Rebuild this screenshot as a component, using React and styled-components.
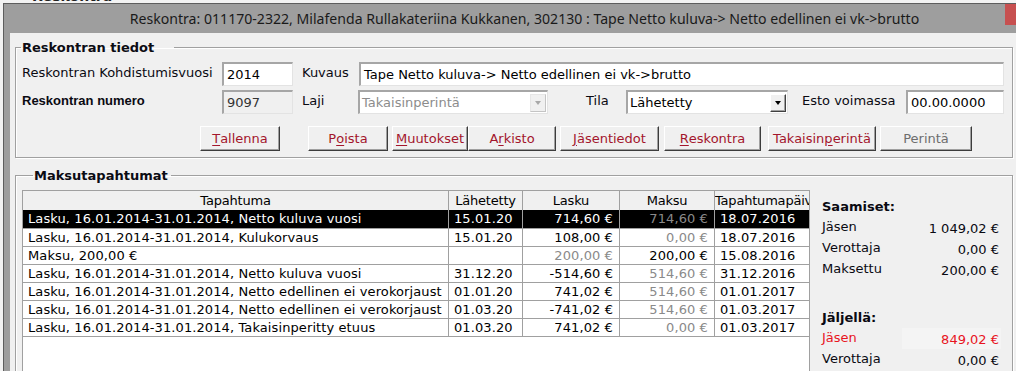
import React from 'react';
import styled, { createGlobalStyle } from 'styled-components';

const GlobalStyle = createGlobalStyle`
  html, body {
    margin: 0;
    padding: 0;
    background: #f3f3f3;
    overflow: hidden;
  }
  body {
    font-family: "DejaVu Sans", Verdana, sans-serif;
    font-size: 13px;
    color: #000;
  }
`;

const Screen = styled.div`
  width: 1016px;
  height: 371px;
  overflow: hidden;
  background: #f3f3f3;
`;

const Backdrop = styled.div`
  height: 3px;
  overflow: hidden;
  padding-left: 32px;
  font: bold 14px "DejaVu Sans", sans-serif;
  line-height: 14px;
  color: #222;

  span {
    display: block;
    margin-top: -11px;
  }
`;

const Window = styled.div`
  margin-left: 3px;
  width: 1042px;
  height: 368px;
  box-sizing: border-box;
  border-top: 1px solid #5e5e5e;
  border-left: 1px solid #5e5e5e;
  background: #9e9e9e;
  padding-left: 6px;
  display: flex;
  flex-direction: column;
`;

const TitleBar = styled.div`
  height: 29px;
  margin-left: -6px;
  display: grid;
  grid-template-columns: 1fr auto 1fr;
  font-family: "Noto Sans", "Open Sans", sans-serif;
  font-size: 14.1px;
  color: #1a1a1a;
`;

const TitleText = styled.div`
  grid-column: 2;
  align-self: center;
  white-space: nowrap;
  padding-bottom: 1px;
`;

const CloseButton = styled.div`
  grid-column: 3;
  justify-self: end;
  width: 40px;
  height: 21px;
  background: #c75050;
`;

const Client = styled.div`
  flex: 1;
  background: #f0f0f0;
  padding: 0 0 0 5px;
  overflow: hidden;
`;

const Group = styled.fieldset`
  margin: ${p => p.$mt}px 0 0 0;
  width: 998px;
  height: ${p => p.$h}px;
  box-sizing: border-box;
  padding: ${p => p.$pt}px 0 0 6px;
  border: 1px solid #a0a0a0;
  box-shadow: inset 1px 1px 0 #fff, 1px 1px 0 #fff;
  min-width: 0;
`;

const Legend = styled.legend`
  font-weight: bold;
  font-size: 13px;
  line-height: 15px;
  color: #0c0c14;
  padding: 0 ${p => p.$pr}px 0 1px;
  margin-left: ${p => p.$ml}px;
`;

const FormRow = styled.div`
  display: flex;
  align-items: center;
  height: 24px;
  margin-top: ${p => p.$mt || 0}px;
`;

const Label = styled.div`
  width: ${p => p.$w}px;
  flex-shrink: 0;
  box-sizing: border-box;
  padding-left: ${p => p.$pl || 0}px;
  padding-bottom: 3px;
  font-family: ${p => (p.$bold ? '"Liberation Sans", Arial, sans-serif' : 'inherit')};
  font-weight: ${p => (p.$bold ? 'bold' : 'normal')};
  white-space: nowrap;
  color: #0a0a12;
`;

const TextBox = styled.div`
  width: ${p => p.$w}px;
  flex-shrink: 0;
  height: 24px;
  box-sizing: border-box;
  border-style: solid;
  border-width: 2px 1px 1px 2px;
  border-color: #a6a6a6 #e3e3e3 #e3e3e3 #a6a6a6;
  background: ${p => (p.$disabled ? '#f0f0f0' : '#fff')};
  color: ${p => (p.$disabled ? '#333' : '#000')};
  padding: 0 3px;
  line-height: 21px;
  white-space: nowrap;
  overflow: hidden;
`;

const Combo = styled.div`
  width: ${p => p.$w}px;
  flex-shrink: 0;
  height: 24px;
  box-sizing: border-box;
  border-style: solid;
  border-width: 2px 1px 1px 2px;
  border-color: #a6a6a6 #e3e3e3 #e3e3e3 #a6a6a6;
  background: #fff;
  display: flex;
  align-items: center;
  color: ${p => (p.$disabled ? '#8c8c8c' : '#000')};
`;

const ComboText = styled.div`
  flex: 1;
  padding-left: 2px;
  line-height: 20px;
  white-space: nowrap;
  overflow: hidden;
`;

const ComboButton = styled.div`
  width: 16px;
  height: 18px;
  margin-right: 1px;
  box-sizing: border-box;
  background: #f0f0f0;
  border: 1px solid;
  border-color: ${p => (p.$disabled ? '#e6e6e6 #c4c4c4 #c4c4c4 #e6e6e6' : '#fff #404040 #404040 #fff')};
  box-shadow: ${p => (p.$disabled ? 'none' : 'inset -1px -1px 0 #a0a0a0')};
  display: flex;
  align-items: center;
  justify-content: center;

  &::after {
    content: '';
    border-left: 3.5px solid transparent;
    border-right: 3.5px solid transparent;
    border-top: 4px solid ${p => (p.$disabled ? '#a8a8a8' : '#000')};
    margin-top: 1px;
  }
`;

const ButtonRow = styled.div`
  display: flex;
  margin-top: 12px;
`;

const Button = styled.div`
  width: ${p => p.$w}px;
  flex-shrink: 0;
  height: 25px;
  margin-left: ${p => p.$ml}px;
  box-sizing: border-box;
  background: #f0f0f0;
  border: 1px solid;
  border-color: #fff #3c3c3c #3c3c3c #fff;
  box-shadow: inset -1px -1px 0 #a0a0a0;
  display: flex;
  align-items: center;
  justify-content: center;
  color: ${p => (p.$disabled ? '#6d6d6d' : '#a3162c')};
  white-space: nowrap;
  padding-bottom: 1px;

  u {
    text-underline-offset: 2px;
  }
`;

const Split = styled.div`
  display: flex;
`;

const TableBox = styled.div`
  width: 788px;
  flex-shrink: 0;
  height: 200px;
  box-sizing: border-box;
  border: 1px solid #a0a0a0;
  background: #fff;
  overflow: hidden;
`;

const Row = styled.div`
  display: grid;
  grid-template-columns: 426px 74px 97px 95px 94px;
  height: ${p => p.$h}px;
  box-sizing: border-box;
  border-bottom: ${p => (p.$head ? 'none' : '1px solid #a0a0a0')};
  background: ${p => (p.$head ? '#f0f0f0' : p.$selected ? '#000' : '#fff')};
  color: ${p => (p.$selected ? '#fff' : '#000')};
  letter-spacing: ${p => (p.$head ? '-0.2px' : '0.1px')};
`;

const Cell = styled.div`
  box-sizing: border-box;
  border-right: 1px solid #a0a0a0;
  padding: ${p => (p.$head ? '0' : p.$right ? '0 6px 0 0' : '0 0 0 5px')};
  text-align: ${p => (p.$head ? 'center' : p.$right ? 'right' : 'left')};
  line-height: ${p => p.$lh}px;
  white-space: nowrap;
  overflow: hidden;
  color: ${p => (p.$dim ? '#8a8a8a' : 'inherit')};

  &:last-child {
    border-right: none;
  }
`;

const Summary = styled.div`
  width: 201px;
  flex-shrink: 0;
  box-sizing: border-box;
  padding: 7px 12px 0 12px;
  line-height: 20px;
  color: #0a0a12;
`;

const SummaryTitle = styled.div`
  font-weight: bold;
  margin-top: ${p => p.$mt || 0}px;
`;

const SummaryLine = styled.div`
  display: flex;
  justify-content: space-between;
  color: ${p => (p.$alert ? '#e8141e' : 'inherit')};
`;

const SummaryValue = styled.span`
  padding: 3px 2px 0 2px;
  margin-right: -2px;
  line-height: 18px;
  background: ${p => (p.$alert ? '#f4f4f4' : 'transparent')};
  width: ${p => (p.$alert ? '95px' : 'auto')};
  text-align: right;
`;

const buttons = [
  { pre: '', key: 'T', post: 'allenna', ml: 178, w: 80 },
  { pre: 'P', key: 'o', post: 'ista', ml: 28, w: 80 },
  { pre: '', key: 'M', post: 'uutokset', ml: 4, w: 76 },
  { pre: 'A', key: 'r', post: 'kisto', ml: 0, w: 88 },
  { pre: '', key: 'J', post: 'äsentiedot', ml: 4, w: 99 },
  { pre: '', key: 'R', post: 'eskontra', ml: 5, w: 97 },
  { pre: 'Takaisin', key: 'p', post: 'erintä', ml: 7, w: 108 },
  { pre: 'Perintä', key: '', post: '', ml: 4, w: 92, disabled: true },
];

const rows = [
  { text: 'Lasku, 16.01.2014-31.01.2014, Netto kuluva vuosi', sent: '15.01.20', bill: '714,60 €', pay: '714,60 €', payDim: true, date: '18.07.2016', selected: true },
  { text: 'Lasku, 16.01.2014-31.01.2014, Kulukorvaus', sent: '15.01.20', bill: '108,00 €', pay: '0,00 €', payDim: true, date: '18.07.2016' },
  { text: 'Maksu, 200,00 €', sent: '', bill: '200,00 €', billDim: true, pay: '200,00 €', date: '15.08.2016' },
  { text: 'Lasku, 16.01.2014-31.01.2014, Netto kuluva vuosi', sent: '31.12.20', bill: '-514,60 €', pay: '514,60 €', payDim: true, date: '31.12.2016' },
  { text: 'Lasku, 16.01.2014-31.01.2014, Netto edellinen ei verokorjaust', sent: '01.01.20', bill: '741,02 €', pay: '514,60 €', payDim: true, date: '01.01.2017' },
  { text: 'Lasku, 16.01.2014-31.01.2014, Netto edellinen ei verokorjaust', sent: '01.03.20', bill: '-741,02 €', pay: '514,60 €', payDim: true, date: '01.03.2017' },
  { text: 'Lasku, 16.01.2014-31.01.2014, Takaisinperitty etuus', sent: '01.03.20', bill: '741,02 €', pay: '0,00 €', payDim: true, date: '01.03.2017' },
];

export default function App() {
  return (
    <Screen>
      <GlobalStyle />
      <Backdrop><span>Reskontra</span></Backdrop>
      <Window>
        <TitleBar>
          <TitleText>Reskontra: 011170-2322, Milafenda Rullakateriina Kukkanen, 302130 : Tape Netto kuluva-&gt; Netto edellinen ei vk-&gt;brutto</TitleText>
          <CloseButton />
        </TitleBar>
        <Client>
          <Group $mt={7} $h={118} $pt={7}>
            <Legend $ml={-1} $pr={20}>Reskontran tiedot</Legend>
            <FormRow>
              <Label $w={200}>Reskontran Kohdistumisvuosi</Label>
              <TextBox $w={71}>2014</TextBox>
              <Label $w={66} $pl={9}>Kuvaus</Label>
              <TextBox $w={645}>Tape Netto kuluva-&gt; Netto edellinen ei vk-&gt;brutto</TextBox>
            </FormRow>
            <FormRow $mt={4}>
              <Label $w={200} $bold>Reskontran numero</Label>
              <TextBox $w={71} $disabled>9097</TextBox>
              <Label $w={65} $pl={9}>Laji</Label>
              <Combo $w={190} $disabled>
                <ComboText>Takaisinperintä</ComboText>
                <ComboButton $disabled />
              </Combo>
              <Label $w={78} $pl={38}>Tila</Label>
              <Combo $w={162}>
                <ComboText>Lähetetty</ComboText>
                <ComboButton />
              </Combo>
              <Label $w={118} $pl={14}>Esto voimassa</Label>
              <TextBox $w={98}>00.00.0000</TextBox>
            </FormRow>
            <ButtonRow>
              {buttons.map((b, i) => (
                <Button key={i} $ml={b.ml} $w={b.w} $disabled={b.disabled}>
                  {b.pre}{b.key && <u>{b.key}</u>}{b.post}
                </Button>
              ))}
            </ButtonRow>
          </Group>
          <Group $mt={10} $h={220} $pt={7}>
            <Legend $ml={11} $pr={3}>Maksutapahtumat</Legend>
            <Split>
              <TableBox>
                <Row $head $h={19}>
                  <Cell $head $lh={19}>Tapahtuma</Cell>
                  <Cell $head $lh={19}>Lähetetty</Cell>
                  <Cell $head $lh={19}>Lasku</Cell>
                  <Cell $head $lh={19}>Maksu</Cell>
                  <Cell $head $lh={19}>Tapahtumapäivä</Cell>
                </Row>
                {rows.map((r, i) => (
                  <Row key={i} $h={i === 0 ? 19 : 18} $selected={r.selected}>
                    <Cell $lh={17}>{r.text}</Cell>
                    <Cell $lh={17}>{r.sent}</Cell>
                    <Cell $lh={17} $right $dim={r.billDim}>{r.bill}</Cell>
                    <Cell $lh={17} $right $dim={r.payDim}>{r.pay}</Cell>
                    <Cell $lh={17}>{r.date}</Cell>
                  </Row>
                ))}
              </TableBox>
              <Summary>
                <SummaryTitle>Saamiset:</SummaryTitle>
                <SummaryLine><span>Jäsen</span><SummaryValue>1 049,02 €</SummaryValue></SummaryLine>
                <SummaryLine><span>Verottaja</span><SummaryValue>0,00 €</SummaryValue></SummaryLine>
                <SummaryLine><span>Maksettu</span><SummaryValue>200,00 €</SummaryValue></SummaryLine>
                <SummaryTitle $mt={28}>Jäljellä:</SummaryTitle>
                <SummaryLine $alert><span>Jäsen</span><SummaryValue $alert>849,02 €</SummaryValue></SummaryLine>
                <SummaryLine><span>Verottaja</span><SummaryValue>0,00 €</SummaryValue></SummaryLine>
              </Summary>
            </Split>
          </Group>
        </Client>
      </Window>
    </Screen>
  );
}
